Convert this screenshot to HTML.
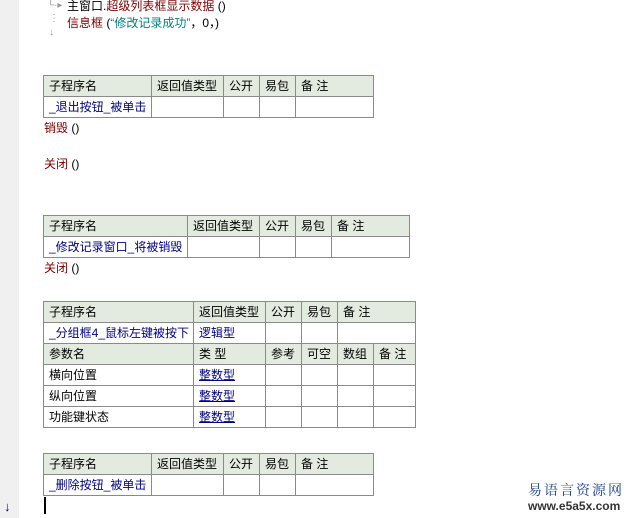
<!DOCTYPE html>
<html><head><meta charset="utf-8"><style>
body{margin:0;width:643px;height:518px;background:#fff;position:relative;overflow:hidden;font-family:"Liberation Sans","Noto Sans CJK SC","WenQuanYi Zen Hei",sans-serif;font-size:12px;color:#000}
.gut{position:absolute;left:0;top:0;width:19px;height:518px;background:#f0f0f0}
.t{position:absolute;left:43px;border-collapse:collapse;table-layout:fixed}
.t td{border:1px solid #8a8a8a;height:20px;padding:0 0 0 5px;white-space:nowrap;overflow:hidden;line-height:19px}
.h td{background:#e3ebe0}
.n{color:#000080}
.u{color:#000080;text-decoration:underline}
.r{color:#800000}
.p{position:absolute;white-space:nowrap;line-height:14px}
</style></head><body>
<div class="gut"></div>
<div class="p" style="left:47px;top:-1px;color:#999;font-size:10px">└·▸</div>
<div class="p" style="left:67px;top:-1px"><span>主窗口.</span><span class="r">超级列表框显示数据</span> ()</div>
<div class="p" style="left:49px;top:12px;color:#999;font-size:10px">⋮<br>↓</div>
<div class="p" style="left:67px;top:16px"><span class="r">信息框</span> (<span style="color:#008080">“修改记录成功”</span>，0，)</div>

<table class="t" style="top:75px;width:330px"><colgroup><col style="width:108px"><col style="width:72px"><col style="width:36px"><col style="width:36px"><col style="width:78px"></colgroup>
<tr class="h"><td>子程序名</td><td>返回值类型</td><td>公开</td><td>易包</td><td>备 注</td></tr>
<tr><td class="n">_退出按钮_被单击</td><td></td><td></td><td></td><td></td></tr></table>
<div class="p r" style="left:44px;top:121px">销毁 <span style="color:#000">()</span></div>
<div class="p r" style="left:44px;top:157px">关闭 <span style="color:#000">()</span></div>

<table class="t" style="top:215px;width:366px"><colgroup><col style="width:144px"><col style="width:72px"><col style="width:36px"><col style="width:36px"><col style="width:78px"></colgroup>
<tr class="h"><td>子程序名</td><td>返回值类型</td><td>公开</td><td>易包</td><td>备 注</td></tr>
<tr><td class="n">_修改记录窗口_将被销毁</td><td></td><td></td><td></td><td></td></tr></table>
<div class="p r" style="left:44px;top:261px">关闭 <span style="color:#000">()</span></div>

<table class="t" style="top:301px;width:372px"><colgroup><col style="width:150px"><col style="width:72px"><col style="width:36px"><col style="width:36px"><col style="width:36px"><col style="width:42px"></colgroup>
<tr class="h"><td>子程序名</td><td>返回值类型</td><td>公开</td><td>易包</td><td colspan="2">备 注</td></tr>
<tr><td class="n">_分组框4_鼠标左键被按下</td><td class="n">逻辑型</td><td></td><td></td><td colspan="2"></td></tr>
<tr class="h"><td>参数名</td><td>类 型</td><td>参考</td><td>可空</td><td>数组</td><td>备 注</td></tr>
<tr><td>横向位置</td><td class="u">整数型</td><td></td><td></td><td></td><td></td></tr>
<tr><td>纵向位置</td><td class="u">整数型</td><td></td><td></td><td></td><td></td></tr>
<tr><td>功能键状态</td><td class="u">整数型</td><td></td><td></td><td></td><td></td></tr></table>

<table class="t" style="top:453px;width:330px"><colgroup><col style="width:108px"><col style="width:72px"><col style="width:36px"><col style="width:36px"><col style="width:78px"></colgroup>
<tr class="h"><td>子程序名</td><td>返回值类型</td><td>公开</td><td>易包</td><td>备 注</td></tr>
<tr><td class="n">_删除按钮_被单击</td><td></td><td></td><td></td><td></td></tr></table>
<div style="position:absolute;left:44px;top:497px;width:2px;height:17px;background:#000"></div>
<div class="p" style="left:4px;top:500px;color:#000080;font-size:13px">↓</div>
<div class="p" style="left:528px;top:483px;color:#1a3f8f;font-size:14px;font-family:'Noto Serif CJK SC',serif;letter-spacing:2px">易语言资源网</div>
<div class="p" style="left:528px;top:499px;color:#333;font-size:12px;font-weight:bold">www.e5a5x.com</div>
</body></html>
